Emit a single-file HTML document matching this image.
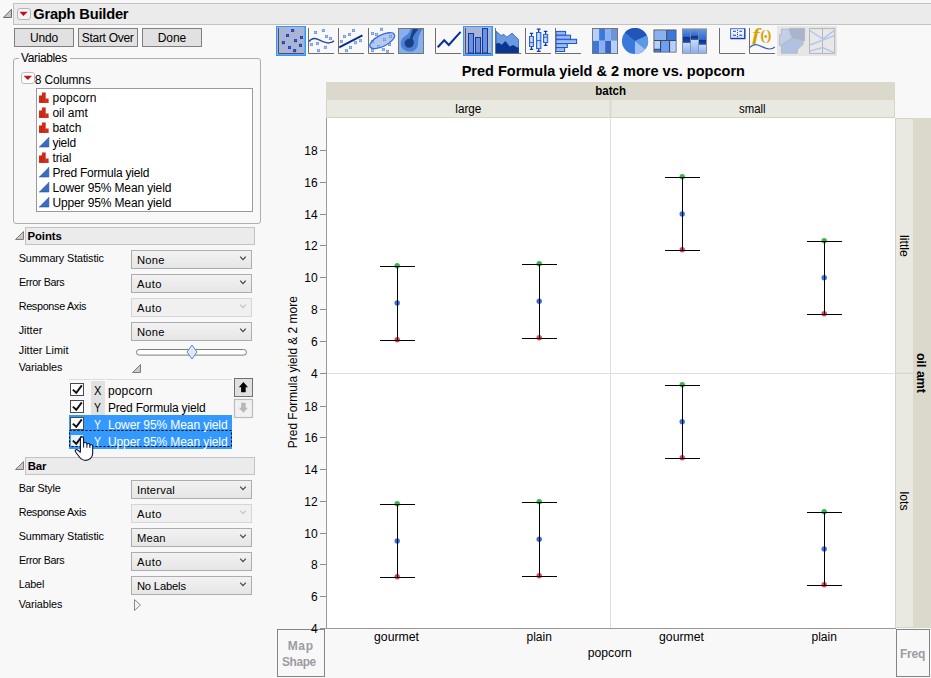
<!DOCTYPE html>
<html lang="en">
<head>
<meta charset="utf-8">
<title>Graph Builder</title>
<style>
html,body{margin:0;padding:0;}
body{width:931px;height:678px;overflow:hidden;background:#f8f8f8;font-family:"Liberation Sans",sans-serif;font-size:12px;color:#000;position:relative;}
.abs,.t,.box,.btn,.dd,.hdr,.cb{position:absolute;box-sizing:border-box;}
.t{white-space:pre;line-height:0;height:0;transform-origin:0 0;}
.hdr{background:#ebebeb;border:1px solid #c2c2c2;}
.btn{background:#e1e1e1;border:1px solid #7f7f7f;}
.dd{left:131px;width:121px;height:19px;border:1px solid #adadad;background:linear-gradient(#f2f2f2,#e6e6e6);}
.dd.dis{border-color:#d6d6d6;background:#f0f0f0;}
.cb{width:14px;height:13px;left:70px;border:1px solid #4a4a4a;background:#fff;}
svg{position:absolute;overflow:visible;z-index:2;}
.t{z-index:3;}
svg text{font-family:"Liberation Sans",sans-serif;}
</style>
</head>
<body>

<!-- ===== outline title bar ===== -->
<div class="hdr" style="left:13px;top:3px;width:930px;height:22px;"></div>
<svg style="left:0;top:0" width="40" height="26">
  <path d="M3.3 17.5 L11.5 17.5 L11.5 9.3 Z" fill="#c4c4c4" stroke="#6c6c6c" stroke-width="1"/>
  <rect x="17.5" y="8.5" width="13" height="11" rx="2.5" fill="#f4f4f4" stroke="#b6b6b6"/>
  <path d="M19.4 11.8 L27.6 11.8 L23.5 16 Z" fill="#c80c14"/>
</svg>

<!-- ===== buttons ===== -->
<div class="btn" style="left:14px;top:28px;width:60px;height:19px;"></div>
<div class="btn" style="left:78px;top:28px;width:60px;height:19px;"></div>
<div class="btn" style="left:142px;top:28px;width:60px;height:19px;"></div>

<!-- ===== Variables group ===== -->
<div class="box" style="left:13px;top:58px;width:248px;height:166px;border:1px solid #adadad;border-radius:3px;"></div>
<div class="abs" style="left:19px;top:54px;width:51px;height:10px;background:#f8f8f8;"></div>
<svg style="left:0;top:60px" width="60" height="30">
  <rect x="21.5" y="12.5" width="13" height="11" rx="2.5" fill="#fdfdfd" stroke="#bcbcbc"/>
  <path d="M23.6 15.8 L32 15.8 L27.8 20 Z" fill="#cc1018"/>
</svg>
<div class="box" style="left:36px;top:88px;width:217px;height:124px;border:1px solid #9a9a9a;background:#fff;"></div>
<svg style="left:0;top:0" width="60" height="230" id="colicons">
  <defs>
    <g id="nom"><rect x="0" y="3" width="3" height="7" fill="#d62a14"/><rect x="3" y="0" width="3.4" height="10" fill="#d62a14"/><rect x="6.4" y="6" width="3.2" height="4" fill="#d62a14"/><rect x="2.4" y="3" width="0.6" height="7" fill="#b41c0a"/><rect x="5.8" y="0" width="0.6" height="10" fill="#b41c0a"/><rect x="0" y="9.4" width="9.6" height="0.8" fill="#a81a0a"/></g>
    <g id="cont"><path d="M0 10 L9.9 10 L9.9 0 Z" fill="#3a6cc0"/><path d="M0 10 L9.9 10 L9.9 0" fill="none" stroke="#2a55a0" stroke-width="0.6"/></g>
  </defs>
  <use href="#nom" x="39" y="92.5"/>
  <use href="#nom" x="39" y="107.5"/>
  <use href="#nom" x="39" y="122.5"/>
  <use href="#cont" x="39" y="137"/>
  <use href="#nom" x="39" y="152.5"/>
  <use href="#cont" x="39" y="167"/>
  <use href="#cont" x="39" y="182"/>
  <use href="#cont" x="39" y="197"/>
</svg>

<!-- ===== Points section ===== -->
<div class="hdr" style="left:25px;top:227px;width:230px;height:18px;"></div>
<svg style="left:0;top:220px" width="30" height="30"><path d="M15.5 19.5 L23.5 19.5 L23.5 11.5 Z" fill="#c8c8c8" stroke="#7c7c7c"/></svg>
<div class="dd" style="top:250px;"></div>
<div class="dd" style="top:274px;"></div>
<div class="dd dis" style="top:298px;"></div>
<div class="dd" style="top:322px;"></div>
<svg style="left:0;top:0" width="260" height="600" id="chev">
  <g fill="none" stroke="#444" stroke-width="1.2">
    <path d="M240.2 256.7 L243 259.7 L245.8 256.7"/>
    <path d="M240.2 280.7 L243 283.7 L245.8 280.7"/>
    <path d="M240.2 304.7 L243 307.7 L245.8 304.7" stroke="#c4c4c4"/>
    <path d="M240.2 328.7 L243 331.7 L245.8 328.7"/>
    <path d="M240.2 486.7 L243 489.7 L245.8 486.7"/>
    <path d="M240.2 510.7 L243 513.7 L245.8 510.7" stroke="#c4c4c4"/>
    <path d="M240.2 534.7 L243 537.7 L245.8 534.7"/>
    <path d="M240.2 558.7 L243 561.7 L245.8 558.7"/>
    <path d="M240.2 582.7 L243 585.7 L245.8 582.7"/>
  </g>
  <!-- slider -->
  <rect x="136.5" y="349.5" width="110" height="5.6" rx="2.8" fill="#fff" stroke="#7c7c7c"/>
  <path d="M192 345 L197 352 L192 359 L187 352 Z" fill="#dce9f8" stroke="#5b88c4"/>
  <!-- Variables disclosure -->
  <path d="M132.5 372.5 L140.5 372.5 L140.5 364.5 Z" fill="#c8c8c8" stroke="#7c7c7c"/>
  <path d="M134.5 599.5 L140.5 605 L134.5 610.5 Z" fill="#f4f4f4" stroke="#8a8a8a"/>
</svg>

<!-- variable role list -->
<div class="abs" style="left:69px;top:379px;width:22px;height:1px;background:#dcdcdc;"></div>
<div class="abs" style="left:92px;top:379px;width:13px;height:1px;background:#dcdcdc;"></div>
<div class="abs" style="left:106px;top:379px;width:126px;height:1px;background:#dcdcdc;"></div>
<div class="abs" style="left:91px;top:381px;width:14px;height:34px;background:#e1e1e1;"></div>
<div class="abs" style="left:69px;top:415px;width:163px;height:34px;background:#3399ff;"></div>
<div class="cb" style="top:383px;"></div>
<div class="cb" style="top:400px;"></div>
<div class="cb" style="top:417px;"></div>
<div class="cb" style="top:435px;left:71px;width:12px;height:11px;border:0;background:#e9f1fc;"></div>
<svg style="left:0;top:0" width="260" height="470" id="checks">
  <g fill="none" stroke="#111" stroke-width="1.9">
    <path d="M72.8 389.6 L76.3 392.8 L81.8 385.4"/>
    <path d="M72.8 406.6 L76.3 409.8 L81.8 402.4"/>
    <path d="M72.8 423.6 L76.3 426.8 L81.8 419.4"/>
    <path d="M72.8 440.6 L76.3 443.8 L81.8 436.4"/>
  </g>
  <rect x="69.5" y="430.5" width="162" height="16" fill="none" stroke="#000" stroke-width="1" stroke-dasharray="2 2"/>
  <!-- up / down buttons -->
  <rect x="234.5" y="378.5" width="18" height="18" fill="#e0e0e0" stroke="#707070"/>
  <path d="M243.4 382 L248 387.2 L245.7 387.2 L245.7 392.3 L241.1 392.3 L241.1 387.2 L238.8 387.2 Z" fill="#000"/>
  <rect x="234.5" y="399.5" width="18" height="18" fill="#f1f1f1" stroke="#b9bcc0" stroke-width="1.2"/>
  <path d="M243.4 412.8 L248 407.8 L245.7 407.8 L245.7 402.7 L241.1 402.7 L241.1 407.8 L238.8 407.8 Z" fill="#b8b8b8"/>
  <!-- hand cursor -->
  <path d="M80.4 438.4 C80.4 436.4 83.6 436.4 83.6 438.4 L83.6 443.6 C84 442 86.7 442.1 86.9 443.8 L86.9 444.6 C87.3 443 89.8 443.2 89.9 444.9 L89.9 445.6 C90.4 444.2 92.7 444.5 92.7 446.1 L92.7 453 C92.7 457.6 89.4 460.4 85.6 460.4 C82.4 460.4 80.8 459 79.2 456.8 L75.6 452 C74.4 450.4 76.2 449 77.6 450 L80.4 452.2 Z" fill="#fff" stroke="#10122e" stroke-width="1.1" stroke-linejoin="round"/>
  <path d="M83.6 443.6 V447.6 M86.9 444.6 V447.8 M89.9 445.6 V448" stroke="#10122e" stroke-width="1" fill="none"/>
</svg>

<!-- ===== Bar section ===== -->
<div class="hdr" style="left:25px;top:457px;width:230px;height:18px;"></div>
<svg style="left:0;top:450px" width="30" height="30"><path d="M15.5 19.5 L23.5 19.5 L23.5 11.5 Z" fill="#c8c8c8" stroke="#7c7c7c"/></svg>
<div class="dd" style="top:480px;"></div>
<div class="dd dis" style="top:504px;"></div>
<div class="dd" style="top:528px;"></div>
<div class="dd" style="top:552px;"></div>
<div class="dd" style="top:576px;"></div>

<!-- ===== Map Shape / Freq drop zones ===== -->
<div class="box" style="left:277px;top:629px;width:48px;height:48px;border:1px solid #858585;"></div>
<div class="box" style="left:896px;top:629px;width:34px;height:48px;border:1px solid #858585;"></div>

<svg id="toolbar" style="left:0;top:0" width="931" height="60">
<defs>
<linearGradient id="gb" x1="0" y1="0" x2="1" y2="0"><stop offset="0" stop-color="#7ea6ee"/><stop offset="0.45" stop-color="#d6e4ff"/><stop offset="1" stop-color="#7ea6ee"/></linearGradient>
<linearGradient id="gh" x1="0" y1="0" x2="0" y2="1"><stop offset="0" stop-color="#7ea6ee"/><stop offset="1" stop-color="#b4ccfa"/></linearGradient>
<linearGradient id="gt" x1="0" y1="0" x2="0" y2="1"><stop offset="0" stop-color="#6396e4"/><stop offset="1" stop-color="#2a68d2"/></linearGradient>
<linearGradient id="gd" x1="0" y1="0" x2="0" y2="1"><stop offset="0" stop-color="#0a2f8e"/><stop offset="1" stop-color="#1c4eae"/></linearGradient>
<linearGradient id="gl" x1="0" y1="0" x2="0" y2="1"><stop offset="0" stop-color="#c6dbff"/><stop offset="1" stop-color="#8ab0f0"/></linearGradient>
<linearGradient id="gc" x1="0" y1="0" x2="0" y2="1"><stop offset="0" stop-color="#ffffff"/><stop offset="1" stop-color="#d4e2fb"/></linearGradient>
<g id="pd"><rect x="-1.5" y="-1.5" width="3" height="3" fill="#17389c"/><path d="M-1.5 0H1.5M0 -1.5V1.5" stroke="#3f63c4" stroke-width="0.6"/></g>
<g id="pl"><rect x="-1.5" y="-1.5" width="3" height="3" fill="#6c92de"/><path d="M-1.5 0H1.5M0 -1.5V1.5" stroke="#a9c2f2" stroke-width="0.6"/></g>
</defs>
<rect x="276" y="26" width="30" height="30" fill="#3399ff"/>
<rect x="277" y="27" width="27.5" height="27.5" fill="#a9b4d6"/>
<path d="M278.5 28 V53.5 H304" fill="none" stroke="#4a5068" stroke-width="1"/>
<use href="#pd" x="292.6" y="30.5"/>
<use href="#pd" x="287.5" y="35.5"/>
<use href="#pd" x="301.5" y="37.5"/>
<use href="#pd" x="295.5" y="40.6"/>
<use href="#pd" x="283.4" y="42.6"/>
<use href="#pd" x="300.5" y="45.4"/>
<use href="#pd" x="289.5" y="47.5"/>
<use href="#pd" x="294.6" y="50.6"/>
<path d="M308.5 28 V53.5 H334" fill="none" stroke="#6e6e6e" stroke-width="1"/>
<use href="#pl" x="315.5" y="32.5"/>
<use href="#pl" x="323.4" y="30.5"/>
<use href="#pl" x="326.5" y="36.5"/>
<use href="#pl" x="330.5" y="38.5"/>
<use href="#pl" x="311.4" y="44.5"/>
<use href="#pl" x="317.5" y="43.5"/>
<use href="#pl" x="325.4" y="47.4"/>
<use href="#pl" x="318.5" y="50.6"/>
<path d="M309 41.6 C311 38.6 314.6 37.6 318.5 39.6 C322.5 41.6 325.5 43.4 329 42.9 C331.5 42.5 333 41.8 334 40.8" fill="none" stroke="#27479a" stroke-width="1.4"/>
<path d="M338.5 28 V53.5 H364" fill="none" stroke="#6e6e6e" stroke-width="1"/>
<use href="#pl" x="353.5" y="30.5"/>
<use href="#pl" x="349.5" y="34.5"/>
<use href="#pl" x="344.5" y="36.5"/>
<use href="#pl" x="341.4" y="41.5"/>
<use href="#pl" x="360.5" y="40.6"/>
<use href="#pl" x="355.5" y="42.6"/>
<use href="#pl" x="350.5" y="47.5"/>
<use href="#pl" x="346.5" y="50.6"/>
<path d="M339.2 47.4 L362.4 35.4" fill="none" stroke="#0b2a8a" stroke-width="2"/>
<path d="M368.5 28 V53.5 H394" fill="none" stroke="#6e6e6e" stroke-width="1"/>
<ellipse cx="382.2" cy="40.7" rx="13.6" ry="5.7" transform="rotate(-27 382.2 40.7)" fill="#b4c8f0"/>
<use href="#pl" x="381.5" y="29.4"/>
<use href="#pl" x="372.5" y="33.5"/>
<use href="#pl" x="376.5" y="34.5"/>
<use href="#pl" x="390.5" y="36.5"/>
<use href="#pl" x="384.5" y="39.5"/>
<use href="#pl" x="372.5" y="41.5"/>
<use href="#pl" x="389.5" y="44.5"/>
<use href="#pl" x="378.5" y="46.5"/>
<use href="#pl" x="383.4" y="49.5"/>
<use href="#pl" x="372.5" y="50.6"/>
<use href="#pl" x="387.5" y="51.4"/>
<ellipse cx="382.2" cy="40.7" rx="13.6" ry="5.7" transform="rotate(-27 382.2 40.7)" fill="none" stroke="#336de0" stroke-width="1.3"/>
<rect x="398.5" y="28.5" width="25" height="25" fill="#88aeee" stroke="#757575"/>
<path d="M410.2 29 H422.4 C420.6 32.5 418.6 35.5 418.2 39.5 C418 43 418.6 47 415 50 C411.4 52.8 404.4 51.8 401.8 47.6 C399.4 43 401.4 38 406 35.4 C409 33.6 410 31.4 410.2 29 Z" fill="#4a80d6"/>
<path d="M412.8 29 H418.4 C416 32 413.6 35 412.4 38.8 C414.2 40.4 414.6 44.4 412 46.8 C409.4 48.8 405.4 47.6 404.7 44.2 C404.1 41.2 406.4 38.6 409.8 38.4 C410.8 35 412 32 412.8 29 Z" fill="#1b4184"/>
<path d="M435.5 28 V53.5 H461" fill="none" stroke="#6e6e6e" stroke-width="1"/>
<path d="M437.7 47.2 L444.2 40.3 L448.8 45 L460.6 31.9" fill="none" stroke="#0b2d9c" stroke-width="2" stroke-linejoin="miter"/>
<rect x="463" y="26" width="30" height="30" fill="#3399ff"/>
<rect x="464" y="27" width="27.5" height="27.5" fill="#a9b4d6"/>
<path d="M465.5 28 V53.5 H491" fill="none" stroke="#4a5068" stroke-width="1"/>
<rect x="468.5" y="33.5" width="5.0" height="19.5" fill="#6d91da" stroke="#0b3aa4" stroke-width="1"/>
<rect x="475.5" y="37.5" width="5.0" height="15.5" fill="#6d91da" stroke="#0b3aa4" stroke-width="1"/>
<rect x="482.5" y="28.6" width="5.0" height="24.4" fill="#6d91da" stroke="#0b3aa4" stroke-width="1"/>
<path d="M496 31.2 L501.1 35.5 L504 34.4 L506.8 37.2 L512.1 33.2 L518.5 39.4 V53 H496 Z" fill="#6a9ae0" stroke="#2c5cc2" stroke-width="0.8"/>
<path d="M496 43.6 L499 42.9 L501.8 44.7 L505.4 41.1 L509.6 46.5 L513.5 45 L516.7 47.2 L518.8 47.6 V53 H496 Z" fill="#0a3590"/>
<path d="M495.5 28 V53.5 H521" fill="none" stroke="#6e6e6e" stroke-width="1"/>
<path d="M525.5 28 V53.5 H551" fill="none" stroke="#6e6e6e" stroke-width="1"/>
<path d="M531.5 33.3 V49.4 M529.8 33.3 H533.2 M529.8 49.4 H533.2" stroke="#0b3aa4" stroke-width="1.2" fill="none"/>
<rect x="529.5" y="36.5" width="4.0" height="10.0" fill="url(#gb)" stroke="#2a62dc" stroke-width="1"/>
<path d="M529.5 42.6 H533.5" stroke="#2a62dc" stroke-width="1"/>
<path d="M538.7 29.2 V51.3 M536.8 29.2 H540.6 M536.8 51.3 H540.6" stroke="#0b3aa4" stroke-width="1.2" fill="none"/>
<rect x="536.5" y="32.5" width="4.399999999999977" height="16.1" fill="url(#gb)" stroke="#2a62dc" stroke-width="1"/>
<path d="M536.5 40.6 H540.9" stroke="#2a62dc" stroke-width="1"/>
<path d="M545.6 31.3 V45.4 M543.8 31.3 H547.4000000000001 M543.8 45.4 H547.4000000000001" stroke="#0b3aa4" stroke-width="1.2" fill="none"/>
<rect x="543.5" y="34.4" width="4.2000000000000455" height="8.100000000000001" fill="url(#gb)" stroke="#2a62dc" stroke-width="1"/>
<path d="M543.5 37.2 H547.7" stroke="#2a62dc" stroke-width="1"/>
<rect x="556" y="31.4" width="9.600000000000023" height="3.8000000000000043" fill="url(#gh)" stroke="#1b52d2" stroke-width="1"/>
<rect x="556" y="35.2" width="14.600000000000023" height="4.099999999999994" fill="url(#gh)" stroke="#1b52d2" stroke-width="1"/>
<rect x="556" y="39.3" width="20.600000000000023" height="4.200000000000003" fill="url(#gh)" stroke="#1b52d2" stroke-width="1"/>
<rect x="556" y="43.5" width="11.299999999999955" height="4.0" fill="url(#gh)" stroke="#1b52d2" stroke-width="1"/>
<rect x="556" y="47.5" width="8.600000000000023" height="4.0" fill="url(#gh)" stroke="#1b52d2" stroke-width="1"/>
<path d="M555.5 28 V53.5 H581" fill="none" stroke="#6e6e6e" stroke-width="1"/>
<rect x="593" y="29" width="6.100000000000023" height="11.8" fill="#b4d0ff"/>
<rect x="593" y="40.8" width="6.100000000000023" height="12.4" fill="#3a78dc"/>
<rect x="599.1" y="29" width="6.0" height="11.8" fill="#3a78dc"/>
<rect x="599.1" y="40.8" width="6.0" height="12.4" fill="#8ab0f0"/>
<rect x="605.1" y="29" width="5.899999999999977" height="11.8" fill="#8ab0f0"/>
<rect x="605.1" y="40.8" width="5.899999999999977" height="12.4" fill="#3565c0"/>
<rect x="611" y="29" width="6.5" height="11.8" fill="#6a95dc"/>
<rect x="611" y="40.8" width="6.5" height="12.4" fill="#b4d0ff"/>
<rect x="592.5" y="28.5" width="25" height="25" fill="none" stroke="#757575"/>
<circle cx="635.0" cy="41.0" r="13.1" fill="#3a78dc"/>
<path d="M635.0 41.0 L624.98 32.56 A13.1 13.1 0 0 1 646.85 35.42 Z" fill="#2255b8"/>
<path d="M635.0 41.0 L646.85 35.42 A13.1 13.1 0 0 1 645.11 49.33 Z" fill="#5a9ae0"/>
<path d="M635.0 41.0 L645.11 49.33 A13.1 13.1 0 0 1 635.00 54.10 Z" fill="#a0c0f8"/>
<rect x="652.5" y="28.5" width="25" height="25" fill="#fff"/>
<rect x="653.5" y="29.5" width="23" height="23" fill="#474747"/>
<rect x="654.3" y="30.3" width="11.9" height="9.7" fill="#8ab0f0"/>
<rect x="667.2" y="30.3" width="8.6" height="9.7" fill="#3a78dc"/>
<rect x="654.3" y="41.0" width="5.7" height="7.8" fill="#b4d0ff"/>
<rect x="654.3" y="49.8" width="5.7" height="2.0" fill="#3a80e8"/>
<rect x="661.1" y="41.0" width="7.9" height="10.8" fill="#6aa0f8"/>
<rect x="670.1" y="41.0" width="5.7" height="10.8" fill="#b4d0ff"/>
<rect x="682" y="28.4" width="25" height="25.4" fill="#8e8e8e"/>
<rect x="683" y="29.2" width="7.2" height="7.7" fill="url(#gt)"/>
<rect x="683" y="36.9" width="7.2" height="6.0" fill="url(#gd)"/>
<rect x="683" y="42.9" width="7.2" height="10.1" fill="url(#gl)"/>
<rect x="691" y="29.2" width="7.2" height="6.6" fill="url(#gt)"/>
<rect x="691" y="35.8" width="7.2" height="4.1" fill="url(#gd)"/>
<rect x="691" y="39.9" width="7.2" height="13.1" fill="url(#gl)"/>
<rect x="699" y="29.2" width="7.0" height="10.7" fill="url(#gt)"/>
<rect x="699" y="39.9" width="7.0" height="4.9" fill="url(#gd)"/>
<rect x="699" y="44.8" width="7.0" height="8.2" fill="url(#gl)"/>
<path d="M719.5 28 V53.5 H745" fill="none" stroke="#6e6e6e" stroke-width="1"/>
<rect x="730.6" y="28.7" width="14" height="9.6" fill="url(#gc)" stroke="#3b6be0" stroke-width="1"/>
<path d="M730.6 38.6 H744.9 V28.6" fill="none" stroke="#1b3ab0" stroke-width="1.2"/>
<path d="M733 31.3 H735.9 M739.3 31.3 H742.2 M733 35.2 H735.9 M739.3 35.2 H742.2" stroke="#1b3ab0" stroke-width="1.1"/>
<rect x="737" y="29.9" width="1" height="1" fill="#1b3ab0"/>
<rect x="737" y="32.1" width="1" height="1" fill="#1b3ab0"/>
<rect x="737" y="34.0" width="1" height="1" fill="#1b3ab0"/>
<rect x="737" y="36.1" width="1" height="1" fill="#1b3ab0"/>
<path d="M749.5 28 V53.5 H775" fill="none" stroke="#6e6e6e" stroke-width="1"/>
<text transform="translate(752.4 40.2) scale(1.25 1)" style="font-family:'Liberation Serif',serif;font-style:italic;font-weight:bold;font-size:17.4px" fill="#d6a200" stroke="#d6a200" stroke-width="0.15">f</text>
<text x="760.6" y="40" style="font-family:'Liberation Serif',serif;font-weight:bold;font-size:14.5px" fill="#d6a200">(</text>
<text x="766.6" y="40" style="font-family:'Liberation Serif',serif;font-weight:bold;font-size:14.5px" fill="#d6a200">)</text>
<text x="765.8" y="40.2" text-anchor="middle" style="font-family:'Liberation Serif',serif;font-weight:bold;font-size:10px" fill="#d6a200">•</text>
<path d="M750 47.3 C752 45 755 44 758 45 C762 46.4 765 48.8 769.4 49 C771.6 49 773.5 48.2 774.8 47" fill="none" stroke="#3a5ab8" stroke-width="1.2"/>
<rect x="777" y="26" width="60" height="30" fill="#e6e6e6"/>
<path d="M781.4 29.1 H789.2 L791 34.4 L792.6 38 L783.2 44 L781.4 45.4 H779.5 V34.6 H781.4 Z" fill="#c2cfe6" stroke="#b4b4b4" stroke-width="0.8"/>
<path d="M789.2 28.4 H804.6 V40.4 L792.6 38 L791 34.4 Z" fill="#a6b4d0" stroke="#b4b4b4" stroke-width="0.8"/>
<path d="M792.6 38 L804.6 40.4 L803.1 40.8 V44.3 L797.4 49.7 V53.2 H781.4 V45.4 L783.2 44 Z" fill="#b0c2e2" stroke="#b4b4b4" stroke-width="0.8"/>
<rect x="809.5" y="28.6" width="25.2" height="24.8" fill="#e8e8e8" stroke="#b4b4b4" stroke-width="1"/>
<path d="M822.5 28.6 V53.4" stroke="#b4b4b4" stroke-width="1"/>
<path d="M810 30.5 L822.6 39 L834.4 30.4 M810 45 L822.6 40.1 L834.4 35.5 M810 51.1 L822.6 47.5 L834.4 52.9" fill="none" stroke="#b0c6ea" stroke-width="1.5"/>
</svg>

<svg id="chart" style="left:0;top:0" width="931" height="678">
<rect x="326" y="82" width="569" height="18" fill="#dbd9cb"/>
<rect x="326" y="100" width="569" height="18" fill="#e9e9e1"/>
<rect x="326" y="117" width="569" height="1" fill="#d6d4c2"/>
<rect x="326" y="100" width="1" height="18" fill="#d6d4c2"/>
<rect x="894" y="100" width="1" height="18" fill="#d6d4c2"/>
<rect x="609.5" y="100" width="2" height="18" fill="#dbd9cb"/>
<rect x="326" y="118" width="569" height="510" fill="#fff"/>
<rect x="895" y="118" width="18" height="510" fill="#e9e9e1"/>
<rect x="913" y="118" width="18" height="510" fill="#dbd9cb"/>
<rect x="895" y="118" width="1" height="510" fill="#d6d4c2"/>
<rect x="895" y="118" width="18" height="1" fill="#d6d4c2"/>
<rect x="895" y="627" width="18" height="1" fill="#d6d4c2"/>
<rect x="895" y="372.5" width="18" height="1.5" fill="#dbd9cb"/>
<rect x="610" y="118" width="1" height="510" fill="#dedede"/>
<rect x="326" y="373" width="569" height="1" fill="#dedede"/>
<rect x="326" y="118" width="1" height="511" fill="#9a9a9a"/>
<rect x="320" y="628" width="576" height="1" fill="#9a9a9a"/>
<rect x="320" y="150" width="6" height="1" fill="#8c8c8c"/>
<text x="317.6" y="154.8" font-size="12" text-anchor="end">18</text>
<rect x="320" y="182" width="6" height="1" fill="#8c8c8c"/>
<text x="317.6" y="186.8" font-size="12" text-anchor="end">16</text>
<rect x="320" y="214" width="6" height="1" fill="#8c8c8c"/>
<text x="317.6" y="218.8" font-size="12" text-anchor="end">14</text>
<rect x="320" y="245" width="6" height="1" fill="#8c8c8c"/>
<text x="317.6" y="249.8" font-size="12" text-anchor="end">12</text>
<rect x="320" y="277" width="6" height="1" fill="#8c8c8c"/>
<text x="317.6" y="281.8" font-size="12" text-anchor="end">10</text>
<rect x="320" y="309" width="6" height="1" fill="#8c8c8c"/>
<text x="317.6" y="313.8" font-size="12" text-anchor="end">8</text>
<rect x="320" y="341" width="6" height="1" fill="#8c8c8c"/>
<text x="317.6" y="345.8" font-size="12" text-anchor="end">6</text>
<rect x="320" y="373" width="6" height="1" fill="#8c8c8c"/>
<text x="317.6" y="377.8" font-size="12" text-anchor="end">4</text>
<rect x="320" y="406" width="6" height="1" fill="#8c8c8c"/>
<text x="317.6" y="410.8" font-size="12" text-anchor="end">18</text>
<rect x="320" y="437" width="6" height="1" fill="#8c8c8c"/>
<text x="317.6" y="441.8" font-size="12" text-anchor="end">16</text>
<rect x="320" y="469" width="6" height="1" fill="#8c8c8c"/>
<text x="317.6" y="473.8" font-size="12" text-anchor="end">14</text>
<rect x="320" y="501" width="6" height="1" fill="#8c8c8c"/>
<text x="317.6" y="505.8" font-size="12" text-anchor="end">12</text>
<rect x="320" y="533" width="6" height="1" fill="#8c8c8c"/>
<text x="317.6" y="537.8" font-size="12" text-anchor="end">10</text>
<rect x="320" y="564" width="6" height="1" fill="#8c8c8c"/>
<text x="317.6" y="568.8" font-size="12" text-anchor="end">8</text>
<rect x="320" y="596" width="6" height="1" fill="#8c8c8c"/>
<text x="317.6" y="600.8" font-size="12" text-anchor="end">6</text>
<text x="317.6" y="632.8" font-size="12" text-anchor="end">4</text>
<circle cx="397.2" cy="265.7" r="2.7" fill="#3db44c"/>
<circle cx="397.2" cy="303.0" r="2.7" fill="#3c6fe2"/>
<circle cx="397.2" cy="339.7" r="2.7" fill="#e2445c"/>
<rect x="397" y="266" width="1" height="75" fill="#000"/>
<rect x="380" y="266" width="35" height="1" fill="#000"/>
<rect x="380" y="340" width="35" height="1" fill="#000"/>
<circle cx="539.2" cy="263.7" r="2.7" fill="#3db44c"/>
<circle cx="539.2" cy="301.3" r="2.7" fill="#3c6fe2"/>
<circle cx="539.2" cy="337.7" r="2.7" fill="#e2445c"/>
<rect x="539" y="264" width="1" height="75" fill="#000"/>
<rect x="522" y="264" width="35" height="1" fill="#000"/>
<rect x="522" y="338" width="35" height="1" fill="#000"/>
<circle cx="682.2" cy="176.7" r="2.7" fill="#3db44c"/>
<circle cx="682.2" cy="214.0" r="2.7" fill="#3c6fe2"/>
<circle cx="682.2" cy="249.7" r="2.7" fill="#e2445c"/>
<rect x="682" y="177" width="1" height="74" fill="#000"/>
<rect x="665" y="177" width="35" height="1" fill="#000"/>
<rect x="665" y="250" width="35" height="1" fill="#000"/>
<circle cx="824.2" cy="240.7" r="2.7" fill="#3db44c"/>
<circle cx="824.2" cy="277.7" r="2.7" fill="#3c6fe2"/>
<circle cx="824.2" cy="313.7" r="2.7" fill="#e2445c"/>
<rect x="824" y="241" width="1" height="74" fill="#000"/>
<rect x="807" y="241" width="35" height="1" fill="#000"/>
<rect x="807" y="314" width="35" height="1" fill="#000"/>
<circle cx="397.2" cy="503.7" r="2.7" fill="#3db44c"/>
<circle cx="397.2" cy="541.0" r="2.7" fill="#3c6fe2"/>
<circle cx="397.2" cy="576.7" r="2.7" fill="#e2445c"/>
<rect x="397" y="504" width="1" height="74" fill="#000"/>
<rect x="380" y="504" width="35" height="1" fill="#000"/>
<rect x="380" y="577" width="35" height="1" fill="#000"/>
<circle cx="539.2" cy="501.7" r="2.7" fill="#3db44c"/>
<circle cx="539.2" cy="539.3" r="2.7" fill="#3c6fe2"/>
<circle cx="539.2" cy="575.7" r="2.7" fill="#e2445c"/>
<rect x="539" y="502" width="1" height="75" fill="#000"/>
<rect x="522" y="502" width="35" height="1" fill="#000"/>
<rect x="522" y="576" width="35" height="1" fill="#000"/>
<circle cx="682.2" cy="384.7" r="2.7" fill="#3db44c"/>
<circle cx="682.2" cy="421.8" r="2.7" fill="#3c6fe2"/>
<circle cx="682.2" cy="457.7" r="2.7" fill="#e2445c"/>
<rect x="682" y="385" width="1" height="74" fill="#000"/>
<rect x="665" y="385" width="35" height="1" fill="#000"/>
<rect x="665" y="458" width="35" height="1" fill="#000"/>
<circle cx="824.2" cy="511.7" r="2.7" fill="#3db44c"/>
<circle cx="824.2" cy="548.9" r="2.7" fill="#3c6fe2"/>
<circle cx="824.2" cy="584.7" r="2.7" fill="#e2445c"/>
<rect x="824" y="512" width="1" height="74" fill="#000"/>
<rect x="807" y="512" width="35" height="1" fill="#000"/>
<rect x="807" y="585" width="35" height="1" fill="#000"/>
<text x="603.3" y="75.6" font-size="14.67" font-weight="bold" text-anchor="middle" textLength="283.3" lengthAdjust="spacingAndGlyphs">Pred Formula yield &amp; 2 more vs. popcorn</text>
<text x="610.7" y="94.8" font-size="12" font-weight="bold" text-anchor="middle" textLength="30.7" lengthAdjust="spacingAndGlyphs">batch</text>
<text x="468.3" y="113.2" font-size="12" text-anchor="middle" textLength="26" lengthAdjust="spacingAndGlyphs">large</text>
<text x="752.3" y="113.2" font-size="12" text-anchor="middle" textLength="26.5" lengthAdjust="spacingAndGlyphs">small</text>
<text x="396.5" y="641" font-size="12" text-anchor="middle" textLength="45" lengthAdjust="spacingAndGlyphs">gourmet</text>
<text x="681.5" y="641" font-size="12" text-anchor="middle" textLength="45" lengthAdjust="spacingAndGlyphs">gourmet</text>
<text x="539.2" y="641" font-size="12" text-anchor="middle" textLength="25.4" lengthAdjust="spacingAndGlyphs">plain</text>
<text x="824.2" y="641" font-size="12" text-anchor="middle" textLength="25.4" lengthAdjust="spacingAndGlyphs">plain</text>
<text x="609.8" y="657" font-size="12" text-anchor="middle" textLength="44" lengthAdjust="spacingAndGlyphs">popcorn</text>
<text transform="translate(297.2 372.2) rotate(-90)" font-size="12" text-anchor="middle" textLength="152" lengthAdjust="spacingAndGlyphs">Pred Formula yield &amp; 2 more</text>
<text transform="translate(899.7 246) rotate(90)" font-size="12" text-anchor="middle" textLength="22" lengthAdjust="spacingAndGlyphs">little</text>
<text transform="translate(899.7 501) rotate(90)" font-size="12" text-anchor="middle" textLength="19" lengthAdjust="spacingAndGlyphs">lots</text>
<text transform="translate(916.8 373) rotate(90)" font-size="12" font-weight="bold" text-anchor="middle" textLength="40" lengthAdjust="spacingAndGlyphs">oil amt</text>
</svg>

<!-- ===== text layer ===== -->
<span class="t" style="left:33.2px;top:14px;font-size:14.67px;font-weight:bold;letter-spacing:-0.195px;">Graph Builder</span>
<span class="t" style="left:29.9px;top:38px;letter-spacing:-0.096px;">Undo</span>
<span class="t" style="left:81.8px;top:38px;letter-spacing:-0.299px;">Start Over</span>
<span class="t" style="left:157.8px;top:38px;letter-spacing:-0.096px;">Done</span>
<span class="t" style="left:20.7px;top:58px;letter-spacing:-0.350px;transform:scaleX(0.9948);">Variables</span>
<span class="t" style="left:34.7px;top:80px;letter-spacing:-0.145px;">8 Columns</span>
<span class="t" style="left:52.4px;top:98px;letter-spacing:0.121px;">popcorn</span>
<span class="t" style="left:52.4px;top:113px;letter-spacing:0.026px;">oil amt</span>
<span class="t" style="left:52.4px;top:128px;letter-spacing:-0.090px;">batch</span>
<span class="t" style="left:52.4px;top:143px;letter-spacing:-0.222px;">yield</span>
<span class="t" style="left:52.4px;top:158px;letter-spacing:-0.086px;">trial</span>
<span class="t" style="left:52.4px;top:173px;letter-spacing:-0.219px;">Pred Formula yield</span>
<span class="t" style="left:52.4px;top:188px;letter-spacing:-0.127px;">Lower 95% Mean yield</span>
<span class="t" style="left:52.4px;top:203px;letter-spacing:-0.127px;">Upper 95% Mean yield</span>
<span class="t" style="left:27.4px;top:236px;font-size:11.4px;font-weight:bold;letter-spacing:-0.062px;">Points</span>
<span class="t" style="left:18.7px;top:258px;font-size:10.8px;letter-spacing:-0.106px;">Summary Statistic</span>
<span class="t" style="left:18.7px;top:282px;font-size:10.8px;letter-spacing:-0.350px;transform:scaleX(0.9923);">Error Bars</span>
<span class="t" style="left:18.7px;top:306px;font-size:10.8px;letter-spacing:-0.310px;">Response Axis</span>
<span class="t" style="left:18.7px;top:330px;font-size:10.8px;letter-spacing:0.039px;">Jitter</span>
<span class="t" style="left:18.7px;top:350px;font-size:10.8px;letter-spacing:0.063px;">Jitter Limit</span>
<span class="t" style="left:18.7px;top:367px;font-size:10.8px;letter-spacing:-0.077px;">Variables</span>
<span class="t" style="left:136.9px;top:260px;font-size:11.2px;letter-spacing:0.283px;">None</span>
<span class="t" style="left:136.9px;top:284px;font-size:11.2px;letter-spacing:0.528px;">Auto</span>
<span class="t" style="left:136.9px;top:308px;font-size:11.2px;letter-spacing:0.528px;">Auto</span>
<span class="t" style="left:136.9px;top:332px;font-size:11.2px;letter-spacing:0.283px;">None</span>
<span class="t" style="left:93.6px;top:391px;transform:scaleX(0.9232);">X</span>
<span class="t" style="left:107.9px;top:391px;letter-spacing:0.188px;">popcorn</span>
<span class="t" style="left:93.6px;top:408px;transform:scaleX(0.8733);">Y</span>
<span class="t" style="left:107.9px;top:408px;letter-spacing:-0.178px;">Pred Formula yield</span>
<span class="t" style="left:93.6px;top:425px;color:#fff;transform:scaleX(0.8733);">Y</span>
<span class="t" style="left:107.9px;top:425px;color:#fff;letter-spacing:-0.090px;">Lower 95% Mean yield</span>
<span class="t" style="left:93.6px;top:442px;color:#fff;transform:scaleX(0.8733);">Y</span>
<span class="t" style="left:107.9px;top:442px;color:#fff;letter-spacing:-0.090px;">Upper 95% Mean yield</span>
<span class="t" style="left:27.7px;top:466px;font-size:11.4px;font-weight:bold;letter-spacing:-0.100px;">Bar</span>
<span class="t" style="left:18.7px;top:488px;font-size:10.8px;letter-spacing:-0.227px;">Bar Style</span>
<span class="t" style="left:18.7px;top:512px;font-size:10.8px;letter-spacing:-0.310px;">Response Axis</span>
<span class="t" style="left:18.7px;top:536px;font-size:10.8px;letter-spacing:-0.106px;">Summary Statistic</span>
<span class="t" style="left:18.7px;top:560px;font-size:10.8px;letter-spacing:-0.350px;transform:scaleX(0.9923);">Error Bars</span>
<span class="t" style="left:18.7px;top:584px;font-size:10.8px;letter-spacing:-0.205px;">Label</span>
<span class="t" style="left:18.7px;top:604px;font-size:10.8px;letter-spacing:-0.077px;">Variables</span>
<span class="t" style="left:136.9px;top:490px;font-size:11.2px;letter-spacing:0.173px;">Interval</span>
<span class="t" style="left:136.9px;top:514px;font-size:11.2px;letter-spacing:0.528px;">Auto</span>
<span class="t" style="left:136.9px;top:538px;font-size:11.2px;letter-spacing:0.233px;">Mean</span>
<span class="t" style="left:136.9px;top:562px;font-size:11.2px;letter-spacing:0.528px;">Auto</span>
<span class="t" style="left:136.9px;top:586px;font-size:11.2px;letter-spacing:-0.161px;">No Labels</span>
<span class="t" style="left:287.7px;top:646px;font-weight:bold;color:#9c9ca4;letter-spacing:0.650px;">Map</span>
<span class="t" style="left:282.4px;top:662px;font-weight:bold;color:#9c9ca4;letter-spacing:-0.350px;transform:scaleX(0.9880);">Shape</span>
<span class="t" style="left:900.0px;top:654px;font-weight:bold;color:#9c9ca4;letter-spacing:-0.239px;">Freq</span>

</body>
</html>
